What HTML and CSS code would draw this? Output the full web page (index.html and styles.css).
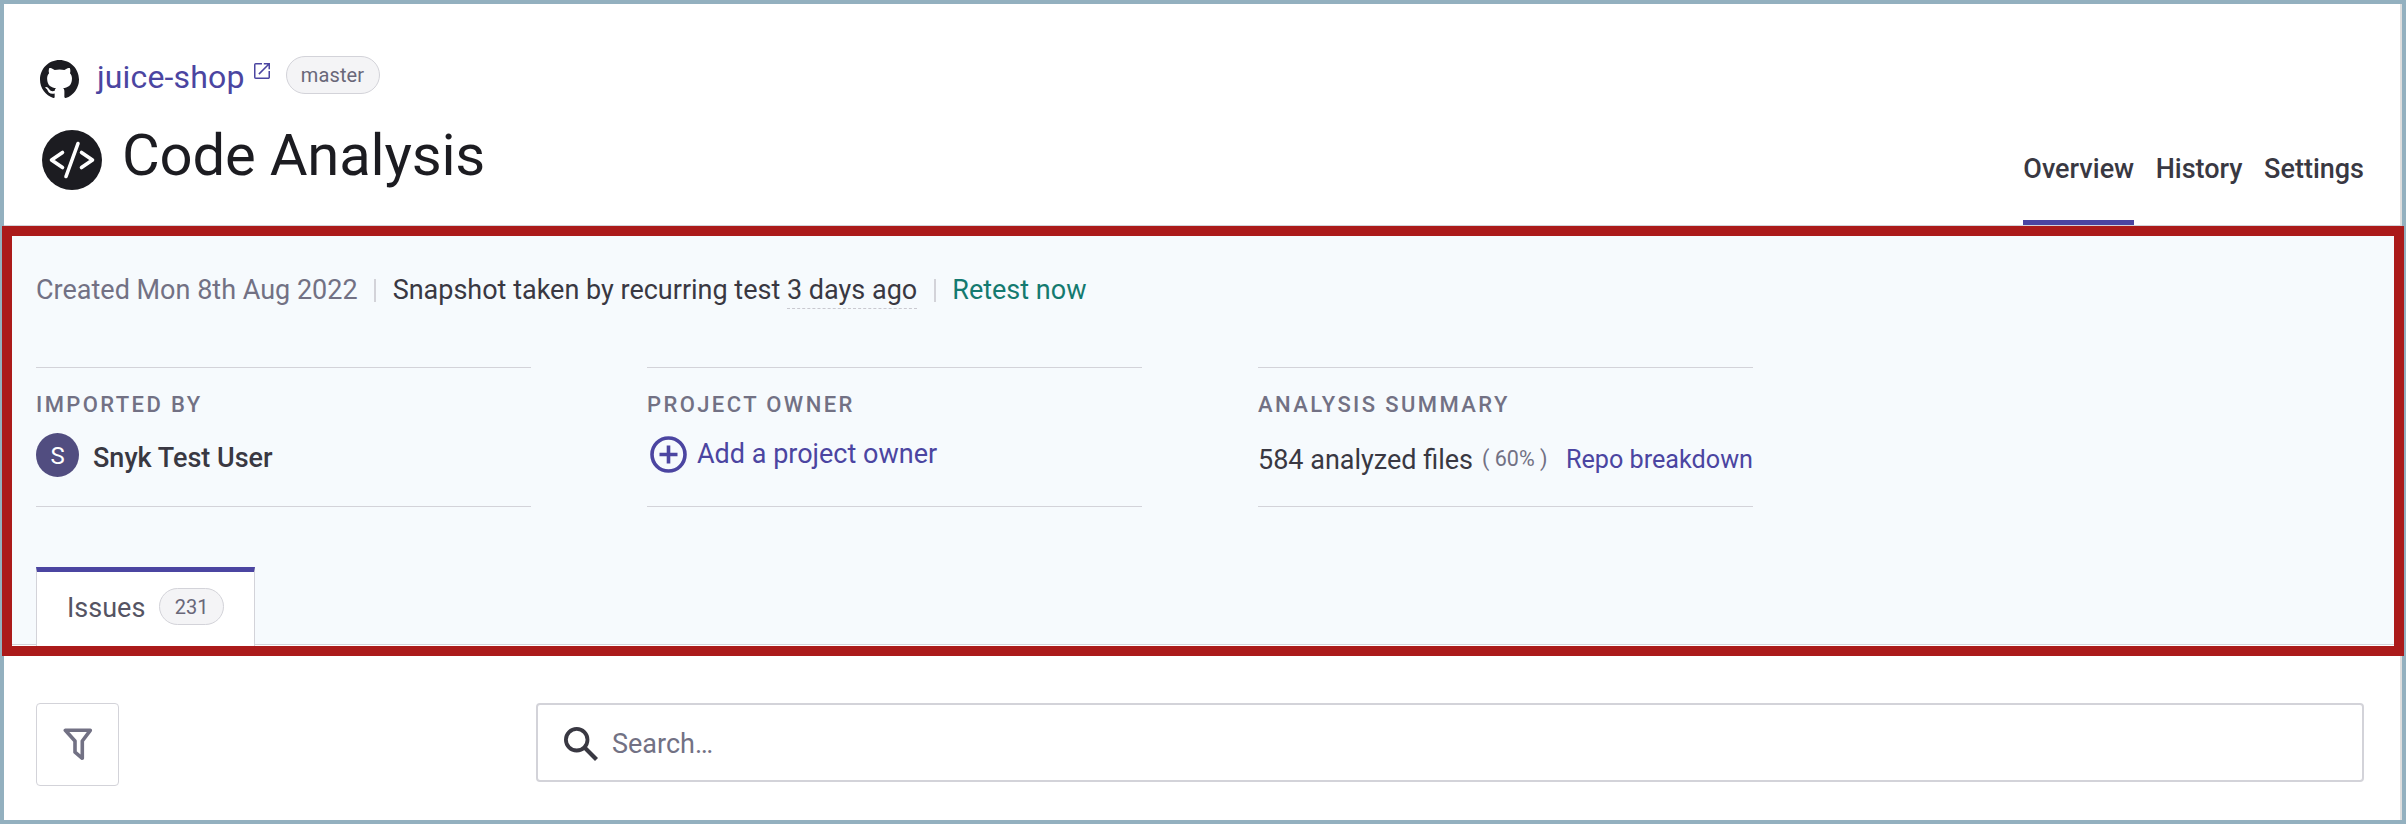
FILE: index.html
```html
<!DOCTYPE html>
<html lang="en">
<head>
<meta charset="utf-8">
<title>Code Analysis</title>
<link rel="stylesheet" href="styles.css">
</head>
<body>
<div class="page">
  <header class="header">
    <div class="heading">
      <div class="repo">
        <svg class="github" viewBox="0 0 16 16" fill="currentColor"><path d="M8 0C3.58 0 0 3.58 0 8c0 3.54 2.29 6.53 5.47 7.59.4.07.55-.17.55-.38 0-.19-.01-.82-.01-1.49-2.01.37-2.53-.49-2.69-.94-.09-.23-.48-.94-.82-1.13-.28-.15-.68-.52-.01-.53.63-.01 1.08.58 1.23.82.72 1.21 1.87.87 2.33.66.07-.52.28-.87.51-1.07-1.78-.2-3.64-.89-3.64-3.95 0-.87.31-1.59.82-2.15-.08-.2-.36-1.02.08-2.12 0 0 .67-.21 2.2.82.64-.18 1.32-.27 2-.27s1.36.09 2 .27c1.53-1.04 2.2-.82 2.2-.82.44 1.1.16 1.92.08 2.12.51.56.82 1.27.82 2.15 0 3.07-1.87 3.75-3.65 3.95.29.25.54.73.54 1.48 0 1.07-.01 1.93-.01 2.2 0 .21.15.46.55.38A8.01 8.01 0 0 0 16 8c0-4.42-3.58-8-8-8z"/></svg>
        <a class="repo-name">juice-shop</a>
        <svg class="external" viewBox="3 3 18 18" fill="currentColor"><path d="M19.300 19.300H4.700V4.700H12V3H5a2 2 0 0 0-2 2v14a2 2 0 0 0 2 2h14c1.100 0 2-.9 2-2v-7h-1.700v7.300zM14 3v1.700h4.100l-10.200 10.200 1.200 1.200L19.300 5.900V10H21V3h-7z"/></svg>
        <span class="pill branch">master</span>
      </div>
      <div class="title-row">
        <svg class="code-icon" viewBox="0 0 60 60"><circle cx="30" cy="30" r="30" fill="#1c1c21"/><path d="M20.500 22.500 9.500 30l11 7.500M39.500 22.500l11 7.500-11 7.500M36 13.500 24 46.500" fill="none" stroke="#fff" stroke-width="3.600" stroke-linecap="round" stroke-linejoin="round"/></svg>
        <h1 class="title">Code Analysis</h1>
      </div>
    </div>
    <nav class="nav">
      <a class="nav-item active">Overview</a>
      <a class="nav-item">History</a>
      <a class="nav-item">Settings</a>
    </nav>
  </header>

  <section class="summary">
    <div class="meta">
      <span class="created">Created Mon 8th Aug 2022</span>
      <i class="sep"></i>
      <span class="snapshot">Snapshot taken by recurring test <span class="ago">3 days ago</span></span>
      <i class="sep"></i>
      <a class="retest">Retest now</a>
    </div>
    <div class="facts">
      <div class="fact">
        <div class="label">IMPORTED BY</div>
        <div class="value"><span class="avatar">S</span><span class="user">Snyk Test User</span></div>
      </div>
      <div class="fact">
        <div class="label">PROJECT OWNER</div>
        <div class="value owner"><svg class="plus" viewBox="0 0 37 37" fill="none" stroke="currentColor"><circle cx="18.500" cy="18.500" r="16.500" stroke-width="3.600"/><path d="M18.500 9.500v18M9.500 18.500h18" stroke-width="3.600"/></svg><a class="add">Add a project owner</a></div>
      </div>
      <div class="fact">
        <div class="label">ANALYSIS SUMMARY</div>
        <div class="value analysis"><span class="files">584 analyzed files</span><span class="percent">( 60% )</span><a class="breakdown">Repo breakdown</a></div>
      </div>
    </div>
    <div class="tabs">
      <div class="tab"><span class="tab-name">Issues</span><span class="pill count">231</span></div>
    </div>
  </section>

  <div class="toolbar">
    <button class="filter" aria-label="Filter"><svg class="funnel" viewBox="0 0 30 33" fill="none" stroke="currentColor" stroke-width="3.600" stroke-linejoin="round"><path d="M2.300 2.300h25L19.300 13v17.300L12 24.200V13z"/></svg></button>
    <div class="search">
      <svg class="magnifier" viewBox="0 0 34 34" fill="none" stroke="currentColor"><circle cx="12.700" cy="12.700" r="10.800" stroke-width="3.800"/><path d="M20.800 20.800 32.500 32.500" stroke-width="4.200"/></svg>
      <span class="placeholder">Search…</span>
    </div>
  </div>
</div>
<div class="highlight"></div>
</body>
</html>
```
FILE: styles.css
```css
* { box-sizing: border-box; }
body { margin: 0; background: #fff; font-family: Roboto, "Liberation Sans", sans-serif; font-size: 27px; color: #393842; }
.page { width: 2406px; height: 824px; border: 4px solid #93b0bf; box-shadow: inset -2px 0 #dedede; overflow: hidden; white-space: nowrap; }
.header { display: flex; justify-content: space-between; height: 222px; padding: 0 38px 0 32px; border-bottom: 1px solid #d3d3d9; }
.heading { padding-top: 52px; }
.repo { display: flex; align-items: flex-start; height: 48px; color: #4b45a1; }
.github { width: 39px; height: 39px; margin: 4px 0 0 4px; color: #1c1c21; }
.repo-name { margin-left: 18px; font-size: 32px; line-height: 43px; letter-spacing: 0.15px; }
.external { width: 16px; height: 16px; margin: 7px 0 0 9px; }
.pill { display: flex; align-items: center; justify-content: center; border: 1px solid #d3d3d9; border-radius: 19px; background: #f4f4f6; color: #696779; }
.branch { width: 94px; height: 38px; margin-left: 16px; font-size: 20px; letter-spacing: 0.1px; }
.title-row { display: flex; align-items: flex-start; padding: 26px 0 0 6px; }
.code-icon { width: 60px; height: 60px; }
.title { margin: -11px 0 0 20px; font-size: 58px; font-weight: 400; line-height: 72px; letter-spacing: -0.2px; color: #1c1c21; }
.nav { display: flex; gap: 21.5px; padding-top: 148px; }
.nav-item { height: 73px; font-size: 27px; font-weight: 500; line-height: 34px; }
.active { border-bottom: 5px solid #4b45a1; }
.summary { height: 419px; padding: 0 32px; background: #f6fafd; border-bottom: 1px solid #d3d3d9; }
.meta { display: flex; align-items: center; height: 126px; padding-top: 2px; }
.created { color: #727184; }
.sep { width: 2px; height: 23px; margin: 1px 16.5px 0; background: #d3d3d9; }
.ago { padding-bottom: 2px; border-bottom: 1px dashed #c9c9d0; }
.retest { color: #147a70; }
.facts { display: grid; grid-template-columns: repeat(3, 495px); gap: 116px; margin-top: 15px; }
.fact { height: 140px; padding-top: 20px; border: solid #d3d3d9; border-width: 1px 0; }
.label { height: 34px; font-size: 22px; font-weight: 500; line-height: 34px; letter-spacing: 2.4px; color: #727184; }
.value { display: flex; align-items: flex-start; height: 56px; padding-top: 11px; line-height: 32px; }
.avatar { width: 43px; height: 44px; border-radius: 50%; background: #514d80; color: #fff; font-size: 24px; line-height: 46px; text-align: center; }
.user { margin: 9px 0 0 14px; font-weight: 500; }
.plus { width: 37px; height: 37px; margin: 3px 0 0 3px; }
.add { margin: 5px 0 0 10px; }
.files { margin-top: 11px; }
.percent { margin: 10px 0 0 9px; font-size: 21.5px; color: #727184; }
.breakdown { margin: 11px 0 0 auto; font-size: 25.2px; }
.owner, .breakdown { color: #4b45a1; }
.tabs { height: 139px; padding-top: 60px; }
.tab { display: flex; align-items: flex-start; width: 219px; height: 79px; padding: 0 30px; background: #fff; border: 1px solid #d3d3d9; border-top: 5px solid #4b45a1; border-bottom: 0; color: #555463; }
.tab-name { margin-top: 19px; line-height: 34px; }
.count { width: 65px; height: 37px; margin: 16px 0 0 14px; font-size: 20px; }
.toolbar { display: flex; align-items: flex-start; padding: 58px 38px 0 32px; }
.filter { display: grid; place-items: center; width: 83px; height: 83px; padding: 0; background: #fff; border: 1px solid #d3d3d9; border-radius: 4px; color: #727184; }
.funnel { width: 30px; height: 33px; }
.search { display: flex; align-items: center; width: 1828px; height: 79px; margin-left: auto; padding-left: 26px; border: 2px solid #d3d3d9; border-radius: 4px; }
.magnifier { width: 34px; height: 34px; margin-top: 2px; }
.placeholder { margin: 3px 0 0 14px; color: #727184; }
.highlight { position: absolute; left: 2px; top: 226px; width: 2402px; height: 430px; border: 10px solid #ab1a1a; }
```
